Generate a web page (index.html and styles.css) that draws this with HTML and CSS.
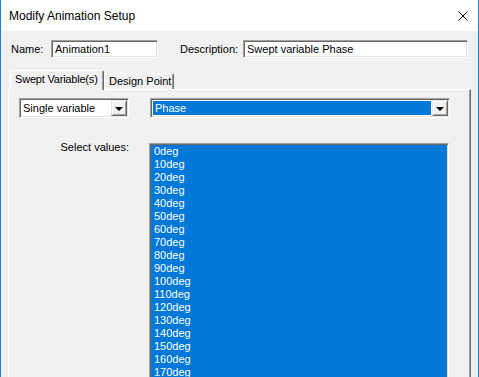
FILE: index.html
```html
<!DOCTYPE html>
<html lang="en">

<head>
  <meta charset="UTF-8">
  <title>Modify Animation Setup</title>
  <link rel="stylesheet" href="styles.css">
</head>

<body>
  <div class="window">
    <div class="titlebar">
      <span class="title">Modify Animation Setup</span>
      <svg class="close" width="10" height="10" viewBox="0 0 10 10">
        <path d="M0.5 0.5 L9.5 9.5 M9.5 0.5 L0.5 9.5" stroke="#000" stroke-width="1" fill="none" />
      </svg>
    </div>

    <div class="client">
      <div class="fields">
        <label class="lbl lbl-name">Name:</label>
        <div class="edit edit-name">Animation1</div>
        <label class="lbl lbl-desc">Description:</label>
        <div class="edit edit-desc">Swept variable Phase</div>
      </div>

      <div class="tabs">
        <div class="tab active">Swept Variable(s)</div>
        <div class="tab">Design Point</div>
      </div>

      <div class="tab-panel">
        <div class="combo-row">
          <div class="combo combo-mode">
            <span class="combo-text">Single variable</span>
            <span class="combo-btn"><span class="arrow"></span></span>
          </div>
          <div class="combo combo-var">
            <span class="combo-text"><span class="selected">Phase</span></span>
            <span class="combo-btn"><span class="arrow"></span></span>
          </div>
        </div>

        <div class="values-row">
          <div class="values-label">Select values:</div>
          <ul class="listbox">
            <li>0deg</li>
            <li>10deg</li>
            <li>20deg</li>
            <li>30deg</li>
            <li>40deg</li>
            <li>50deg</li>
            <li>60deg</li>
            <li>70deg</li>
            <li>80deg</li>
            <li>90deg</li>
            <li>100deg</li>
            <li>110deg</li>
            <li>120deg</li>
            <li>130deg</li>
            <li>140deg</li>
            <li>150deg</li>
            <li>160deg</li>
            <li>170deg</li>
            <li>180deg</li>
            <li>190deg</li>
            <li>200deg</li>
          </ul>
        </div>
      </div>
    </div>
  </div>
</body>

</html>
```

FILE: styles.css
```css
* {
  margin: 0;
  padding: 0;
  box-sizing: border-box;
}

body {
  font-family: 'Liberation Sans', Arial, sans-serif;
  font-size: 11px;
  color: #000;
  background-color: #f0f0f0;
  overflow: hidden;
}

.window {
  width: 479px;
  height: 377px;
  border-left: 1px solid #1883d7;
  border-right: 1px solid #1883d7;
  background-color: #f0f0f0;
  display: flex;
  flex-direction: column;
  overflow: hidden;
}

.titlebar {
  height: 31px;
  flex-shrink: 0;
  background-color: #fff;
  display: flex;
  justify-content: space-between;
  align-items: center;
  padding: 0 10px 0 8px;
}

.title {
  font-size: 12px;
  color: #000;
}

.close {
  display: block;
}

.client {
  flex: 1;
  display: flex;
  flex-direction: column;
  padding-top: 9px;
}

.fields {
  display: flex;
  align-items: center;
  height: 18px;
  padding-left: 10px;
}

.lbl-name {
  width: 40px;
}

.lbl-desc {
  width: 63px;
  margin-left: 22px;
}

/* sunken 3d edges used by edits, combos and the list */
.edit,
.combo,
.listbox {
  border: 1px solid;
  border-color: #a0a0a0 #fff #fff #a0a0a0;
  box-shadow: inset 1px 1px #696969, inset -1px -1px #e3e3e3;
}

.edit {
  height: 18px;
  background-color: #fff;
  padding: 0 3px;
  line-height: 16px;
}

.edit-name {
  width: 107px;
}

.edit-desc {
  width: 225px;
}

.tabs {
  display: flex;
  align-items: flex-end;
  height: 19px;
  margin-top: 12px;
  padding-left: 9px;
}

.tab {
  height: 16px;
  width: 70px;
  padding-left: 4px;
  line-height: 15px;
  white-space: nowrap;
  border-top: 1px solid #fff;
  border-left: 1px solid #fff;
  border-right: 1px solid #696969;
  box-shadow: inset -1px 0 #a0a0a0;
  border-radius: 2px 2px 0 0;
}

.tab.active {
  position: relative;
  z-index: 1;
  width: 94px;
  height: 20px;
  margin-bottom: -1px;
  padding-left: 4px;
  line-height: 17px;
  letter-spacing: -0.2px;
  background-color: #f0f0f0;
}

.tab-panel {
  flex: 1;
  width: 463px;
  margin-left: 7px;
  border-top: 1px solid #fff;
  border-left: 1px solid #fff;
  border-right: 1px solid #696969;
  box-shadow: inset -1px 0 #a0a0a0;
}

.combo-row {
  display: flex;
  gap: 21px;
  margin-top: 8px;
  padding-left: 10px;
}

.combo {
  height: 20px;
  background-color: #fff;
  display: flex;
  padding: 1px;
}

.combo-mode {
  width: 110px;
}

.combo-var {
  width: 300px;
}

.combo-text {
  flex: 1;
  line-height: 16px;
  padding-left: 2px;
  display: flex;
}

.combo-var .combo-text {
  padding: 1px;
}

.selected {
  flex: 1;
  background-color: #0078d7;
  color: #fff;
  padding-left: 2px;
  line-height: 14px;
}

.combo-btn {
  width: 16px;
  height: 16px;
  background-color: #f0f0f0;
  border: 1px solid;
  border-color: #e3e3e3 #696969 #696969 #e3e3e3;
  box-shadow: inset 1px 1px #fff, inset -1px -1px #a0a0a0;
  display: flex;
  align-items: center;
  justify-content: center;
}

.arrow {
  width: 0;
  height: 0;
  border-left: 4px solid transparent;
  border-right: 4px solid transparent;
  border-top: 4px solid #000;
  margin-top: 1px;
}

.values-row {
  display: flex;
  align-items: flex-start;
  gap: 20px;
  margin-top: 25px;
  padding-left: 10px;
}

.values-label {
  width: 110px;
  text-align: right;
  line-height: 13px;
  margin-top: -2px;
}

.listbox {
  width: 300px;
  height: 320px;
  list-style: none;
  background-color: #0078d7;
  color: #fff;
  padding: 1px 2px;
}

.listbox li {
  height: 13px;
  line-height: 13px;
  padding-left: 2px;
}
```
